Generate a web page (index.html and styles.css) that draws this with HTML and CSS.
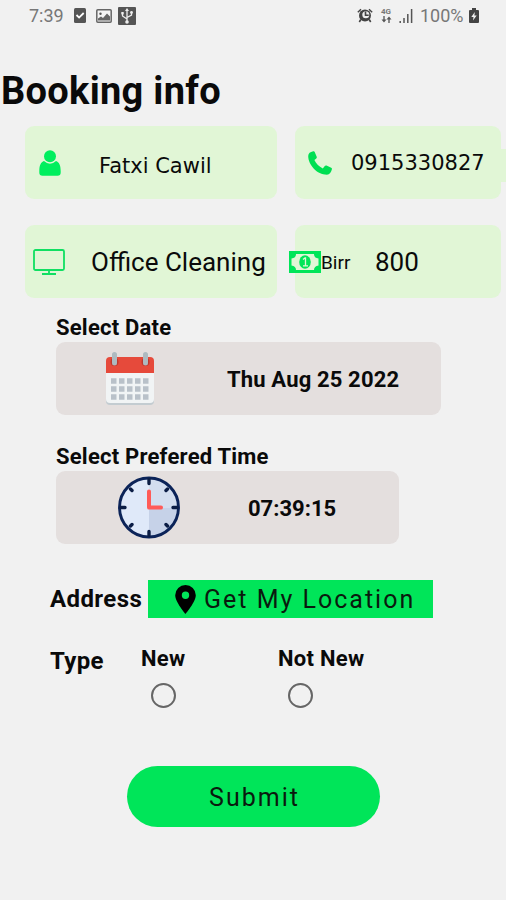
FILE: index.html
```html
<!DOCTYPE html>
<html lang="en">
<head>
    <meta charset="UTF-8">
    <meta name="viewport" content="width=device-width, initial-scale=1.0">
    <title>Booking info</title>
    <link rel="stylesheet" href="styles.css">
</head>
<body>

    <!-- Status Bar -->
    <div class="status-bar">
        <div class="status-left">
            <span class="status-time">7:39</span>
            <svg class="icon-check" width="12" height="15" viewBox="0 0 12 15">
                <rect width="12" height="15" rx="1.5" fill="#555"/>
                <path d="M2.5 7l2.6 2.6L9.7 5" fill="none" stroke="#fff" stroke-width="1.8"/>
            </svg>
            <svg class="icon-image" width="16" height="14" viewBox="0 0 16 14">
                <rect x=".8" y=".8" width="14.4" height="12.4" rx="1" fill="#f4f4f4" stroke="#666" stroke-width="1.5"/>
                <circle cx="4.5" cy="4.7" r="1.2" fill="#555"/>
                <path d="M2 11.5V9.5l3-2 2 1.5 4-4.5 3 3v4z" fill="#666"/>
            </svg>
            <svg class="icon-usb" width="18" height="18" viewBox="0 0 18 18">
                <rect width="18" height="18" rx="1" fill="#555"/>
                <path d="M9 15V3M9 12L4.5 9V6M9 10.5L13.5 8V5.5" fill="none" stroke="#eee" stroke-width="1.3"/>
                <path d="M9 1l2 3H7z" fill="#eee"/>
                <rect x="3.3" y="5" width="2.4" height="2.4" fill="#eee"/>
                <circle cx="13.5" cy="5.5" r="1.4" fill="#eee"/>
                <circle cx="9" cy="15" r="1.8" fill="#eee"/>
            </svg>
        </div>
        <div class="status-right">
            <svg width="16" height="15" viewBox="0 0 16 15">
                <circle cx="8" cy="7.6" r="6" fill="#444"/>
                <circle cx="8.8" cy="6.8" r="3.5" fill="#eee"/>
                <path d="M8.5 3.5v3.8h3.2M3.8 11.5L2.3 14M12.2 11.5l1.5 2.5" fill="none" stroke="#444" stroke-width="1.6"/>
                <path d="M.8 4.2L4 1.2M15.2 4.2L12 1.2" stroke="#444" stroke-width="1.4"/>
            </svg>
            <div class="network">
                <span>4G</span>
                <svg width="11" height="7" viewBox="0 0 11 7">
                    <path d="M3 0v5M8 7V2" stroke="#555" stroke-width="1.3"/>
                    <path d="M.5 3.5h5L3 6.5zM5.5 3.5h5L8 .5z" fill="#555"/>
                </svg>
            </div>
            <svg class="icon-signal" width="14" height="14" viewBox="0 0 14 14">
                <path d="M1.2 12v2M5 9v5M8.8 5v9M12.6 0v14" stroke="#555" stroke-width="1.5"/>
            </svg>
            <span class="status-battery">100%</span>
            <svg class="icon-battery" width="10" height="15" viewBox="0 0 10 15">
                <path d="M3 0h4v2h2q1 0 1 1v11q0 1-1 1H1q-1 0-1-1V3q0-1 1-1h2z" fill="#444"/>
                <path d="M5.8 4L2.3 9h2.200l-.5 3.500L7.700 7.500H5.400z" fill="#f1f1f1"/>
            </svg>
        </div>
    </div>

    <h1 class="title">Booking info</h1>

    <!-- Customer and service cards -->
    <section class="cards">
        <div class="card card-name">
            <svg width="22" height="26" viewBox="0 0 22 26">
                <path d="M5 11C2 12 .3 15 .3 21v1.500Q.3 25.700 3.500 25.700h15q3.200 0 3.200-3.200V21c0-6-1.700-9-4.700-10q-6 5.500-12 0z" fill="#00ef5e"/>
                <circle cx="11" cy="6.300" r="6" fill="#00ef5e"/>
            </svg>
            <span class="card-text">Fatxi Cawil</span>
        </div>
        <div class="card card-phone">
            <svg width="24" height="24" viewBox="0 0 24 24">
                <path d="M5.200.3C6 0 6.400.3 6.700 1l2 4.700c.3.700.1 1.200-.4 1.700L6.400 9c2 4 4.500 6.500 8.400 8.400l2-2.400c.5-.6 1-.7 1.700-.4l4.700 2.200c.7.300.9.800.7 1.500-.7 3-2.200 5.200-5 5.400C9 23.700.3 14 .2 5 .3 2.300 2.200 1 5.200.3z" fill="#00df52"/>
            </svg>
            <span class="card-text">0915330827</span>
        </div>
        <div class="card card-service">
            <svg width="32" height="26" viewBox="0 0 32 26">
                <rect x="1" y="1" width="30" height="20" rx="1.500" fill="none" stroke="#10df62" stroke-width="1.800"/>
                <path d="M16 21v4M9 25h14" stroke="#10df62" stroke-width="1.800"/>
            </svg>
            <span class="card-text">Office Cleaning</span>
        </div>
        <div class="card card-price">
            <svg width="32" height="22" viewBox="0 0 32 22">
                <rect width="32" height="22" fill="#00e558"/>
                <path d="M7 3h18q0 4 4.500 4.500v7Q25 15 25 19H7q0-4-4.500-4.500v-7Q7 7 7 3z" fill="#e1f6d6"/>
                <ellipse cx="16" cy="11" rx="5.800" ry="6.800" fill="#00e558"/>
                <path d="M14 8.500l2-1.500h.5v7.500M14 14.800h5" fill="none" stroke="#e1f6d6" stroke-width="1.300"/>
            </svg>
            <span class="currency">Birr</span>
            <span class="card-text">800</span>
        </div>
    </section>

    <!-- Date and time pickers -->
    <section class="pickers">
        <h2 class="label">Select Date</h2>
        <div class="picker picker-date">
            <svg width="48" height="54" viewBox="0 0 48 54">
                <path d="M0 20h48v29q0 4-4 4H4q-4 0-4-4z" fill="#c3ccd1"/>
                <path d="M0 20h48v27q0 4-4 4H4q-4 0-4-4z" fill="#f1f4f5"/>
                <path d="M0 21V9q0-4 4-4h40q4 0 4 4v12z" fill="#e64a3b"/>
                <circle cx="8.500" cy="10" r="4" fill="#bd392f"/>
                <circle cx="39.500" cy="10" r="4" fill="#bd392f"/>
                <path d="M8.500 2.500v8.500M39.500 2.500v8.500" stroke="#aebac0" stroke-width="5" stroke-linecap="round"/>
                <path d="M5 29h38M5 37h38M5 45h38" stroke="#b9c1c9" stroke-width="5.500" stroke-dasharray="5.500 2.500"/>
            </svg>
            <span>Thu Aug 25 2022</span>
        </div>
        <h2 class="label label-time">Select Prefered Time</h2>
        <div class="picker picker-time">
            <svg width="62" height="63" viewBox="0 0 62 62">
                <circle cx="31" cy="31" r="29.500" fill="#dfe9f9"/>
                <path d="M31 31h29.500A29.500 29.500 0 0 1 31 60.500z" fill="#c6d2e8"/>
                <path d="M31 1.500A29.500 29.500 0 0 1 60.500 31H31z" fill="#d3deef"/>
                <circle cx="31" cy="31" r="29.500" fill="none" stroke="#0b2358" stroke-width="2.900"/>
                <path d="M31 3v4M31 55v4M3 31h4M55 31h4M12.500 12.500l1.500 1.500M48 48l1.500 1.500M49.500 12.500L48 14M14 48l-1.500 1.500" stroke="#0b1d45" stroke-width="3.400" stroke-linecap="round"/>
                <path d="M31 15v16h12" fill="none" stroke="#ff5b58" stroke-width="4" stroke-linecap="round" stroke-linejoin="round"/>
            </svg>
            <span>07:39:15</span>
        </div>
    </section>

    <!-- Address -->
    <div class="address">
        <span class="address-label">Address</span>
        <button class="location-btn">
            <svg width="21" height="29" viewBox="0 0 21 29">
                <path d="M10.500 0A10.300 10.300 0 0 0 .2 10.300C.2 17 10.500 29 10.500 29S20.800 17 20.800 10.300A10.300 10.300 0 0 0 10.500 0zm0 6.500a3.700 3.700 0 1 1 0 7.400 3.700 3.700 0 0 1 0-7.400z" fill="#000"/>
            </svg>
            <span>Get My Location</span>
        </button>
    </div>

    <!-- Type -->
    <div class="type">
        <span class="type-label">Type</span>
        <label class="option option-new"><span>New</span><input type="radio" name="type"></label>
        <label class="option option-not-new"><span>Not New</span><input type="radio" name="type"></label>
    </div>

    <button class="submit-btn">Submit</button>

</body>
</html>
```

FILE: styles.css
```css
* {
    box-sizing: border-box;
}

body {
    font-family: Roboto, sans-serif;
    margin: 0;
    height: 900px;
    background-color: #f1f1f1;
    color: #0a0a0a;
    overflow: hidden;
}

svg {
    display: block;
    flex: none;
}

span {
    white-space: nowrap;
}

/* Status bar */
.status-bar {
    display: flex;
    justify-content: space-between;
    align-items: center;
    height: 31px;
    padding: 0 27px 0 29px;
    color: #777;
    font-size: 18px;
}

.status-left,
.status-right {
    display: flex;
    align-items: center;
}

.status-time {
    width: 45px;
}

.icon-image {
    margin-left: 10px;
}

.icon-usb {
    margin-left: 6px;
}

.network {
    width: 11px;
    margin-left: 8px;
    font-size: 8px;
    font-weight: bold;
    line-height: 8px;
}

.icon-signal {
    margin-left: 7px;
}

.status-battery {
    margin-left: 7px;
    width: 44px;
}

.icon-battery {
    margin-left: 5px;
}

.title {
    margin: 40px 0 15px;
    padding-left: 1px;
    font-size: 38px;
    line-height: 40px;
    font-weight: bold;
    letter-spacing: 0.3px;
}

/* Cards */
.cards {
    display: grid;
    grid-template-columns: 252px 206px;
    grid-auto-rows: 73px;
    gap: 26px 18px;
    padding-left: 25px;
}

.card {
    display: flex;
    align-items: center;
    background-color: #e1f6d6;
    border-radius: 9px;
}

.card-name {
    padding-left: 14px;
    font-family: "DejaVu Sans", sans-serif;
    font-size: 21px;
}

.card-name .card-text {
    margin-left: 38px;
    padding-top: 6px;
}

.card-phone {
    position: relative;
    padding-left: 13px;
    font-family: "DejaVu Sans", sans-serif;
    font-size: 21px;
}

.card-phone .card-text {
    margin-left: 19px;
}

/* input background sticks out of the card on the right */
.card-phone::after {
    content: "";
    position: absolute;
    top: 23px;
    right: -5px;
    width: 6px;
    height: 33px;
    background-color: #e1f6d6;
}

.card-service {
    padding-left: 8px;
    font-size: 26px;
}

.card-service .card-text {
    margin-left: 26px;
}

.card-price {
    font-size: 26px;
}

.card-price svg {
    margin-left: -6px;
}

.currency {
    width: 54px;
    padding-top: 1px;
    font-size: 19px;
}

/* Pickers */
.pickers {
    padding: 16px 0 0 56px;
}

.label {
    margin: 0;
    font-size: 22px;
    line-height: 28px;
    font-weight: bold;
    letter-spacing: 0.22px;
}

.label-time {
    margin-top: 28px;
}

.picker {
    display: flex;
    align-items: center;
    height: 73px;
    background-color: #e4dfde;
    border-radius: 9px;
    font-size: 22px;
    font-weight: bold;
}

.picker span {
    padding-top: 2px;
}

.picker-date {
    width: 385px;
    padding-left: 50px;
}

.picker-date span {
    margin-left: 73px;
    letter-spacing: 0.15px;
}

.picker-time {
    width: 343px;
    padding-left: 62px;
}

.picker-time span {
    margin-left: 68px;
}

/* Address */
.address {
    display: flex;
    align-items: center;
    margin-top: 36px;
    padding-left: 50px;
}

.address-label {
    width: 98px;
    padding-bottom: 1px;
    font-size: 24px;
    font-weight: bold;
    letter-spacing: 0.4px;
}

.location-btn {
    display: flex;
    align-items: center;
    width: 285px;
    height: 38px;
    padding: 0 0 0 27px;
    border: none;
    background-color: #00e559;
    color: #0a1a0e;
    font-family: inherit;
    font-size: 25px;
    letter-spacing: 2px;
}

.location-btn span {
    margin-left: 8px;
    padding-top: 1px;
}

/* Type */
.type {
    display: flex;
    align-items: flex-start;
    margin-top: 28px;
    padding-left: 50px;
}

.type-label {
    width: 91px;
    font-size: 24px;
    line-height: 30px;
    font-weight: bold;
    letter-spacing: 0.3px;
}

.option {
    width: 137px;
    font-size: 22px;
    line-height: 26px;
    font-weight: bold;
    letter-spacing: 0.3px;
}

.option input {
    appearance: none;
    display: block;
    width: 25px;
    height: 25px;
    margin: 11px 0 0 10px;
    border: 2px solid #666;
    border-radius: 50%;
}

.submit-btn {
    display: block;
    width: 253px;
    height: 61px;
    margin: 58px 0 0 127px;
    padding: 2px 0 0 2px;
    border: none;
    border-radius: 31px;
    background-color: #00e559;
    color: #0a1a0e;
    font-family: inherit;
    font-size: 25px;
    letter-spacing: 2px;
}
```
